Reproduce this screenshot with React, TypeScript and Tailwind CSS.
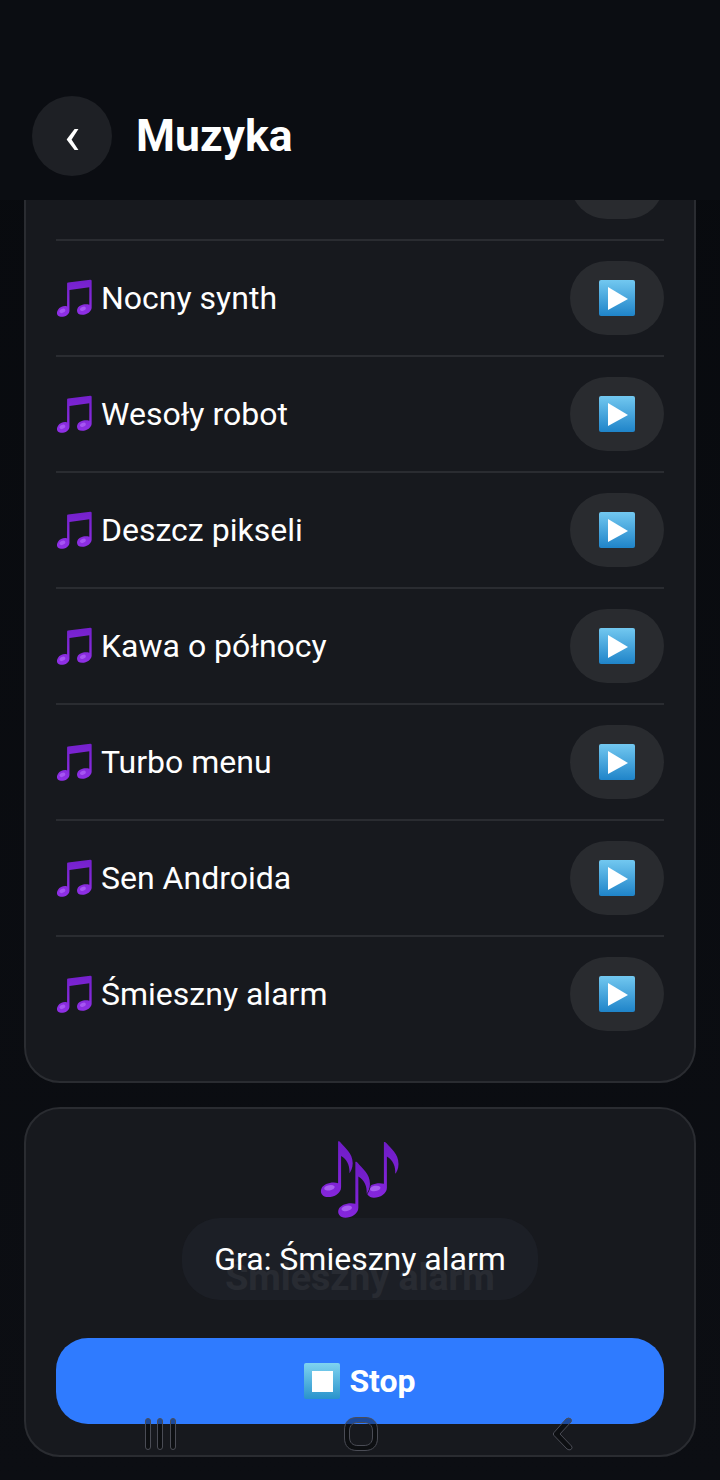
import { useId } from 'react';

const tracks = ['Nocny synth', 'Wesoły robot', 'Deszcz pikseli', 'Kawa o północy', 'Turbo menu', 'Sen Androida', 'Śmieszny alarm'];

// Beamed notes emoji
const NotesIcon = () => {
  const id = useId();
  return (
    <svg width="37" height="39" viewBox="50 25 110 115" className="-mt-[2px] shrink-0">
      <defs>
        <linearGradient id={id} x1="0" y1="0" x2="0" y2="1">
          <stop offset="0" stopColor="#7420cc" />
          <stop offset="1" stopColor="#9030e6" />
        </linearGradient>
      </defs>
      <path
        d="M83 41 Q83 38 86 38 L152 30 Q156 30 156 33 L156 112 C156 124 142 134 128 134 C114 134 110 124 114 115 C118 106 134 100 149 104 L149 52 L90 60 L90 122 C90 134 76 141 64 140 C52 139 50 128 56 119 C62 110 74 106 83 109 Z"
        fill={`url(#${id})`}
      />
      <ellipse cx="69" cy="122" rx="9" ry="6" fill="#a656f2" transform="rotate(-25 69 122)" />
      <ellipse cx="130" cy="116" rx="9" ry="6" fill="#a656f2" transform="rotate(-25 130 116)" />
    </svg>
  );
};

// Single eighth notes, three of them
const MultiNotesIcon = () => {
  const id = useId();
  const note =
    'M84 35 C84 33 88 33 92 38 C105 55 128 68 128 100 C128 115 122 125 118 130 C120 110 112 88 93 78 L93 172 C93 190 72 202 54 202 C38 202 28 190 34 176 C40 162 65 155 84 160 Z';
  return (
    <svg width="80" height="78" viewBox="30 30 240 235">
      <defs>
        <linearGradient id={id} x1="0" y1="0" x2="0" y2="1">
          <stop offset="0" stopColor="#6f1cc6" />
          <stop offset="1" stopColor="#8526dc" />
        </linearGradient>
      </defs>
      <path d={note} fill={`url(#${id})`} />
      <ellipse cx="58" cy="174" rx="16" ry="8" fill="#a85ef0" transform="rotate(-10 58 174)" />
      <path d={note} fill={`url(#${id})`} transform="translate(138 2)" />
      <ellipse cx="196" cy="176" rx="16" ry="8" fill="#a85ef0" transform="rotate(-10 196 176)" />
      <path d={note} fill={`url(#${id})`} stroke="#17191e" strokeWidth="4" paintOrder="stroke" transform="translate(52 62)" />
      <ellipse cx="110" cy="236" rx="16" ry="8" fill="#a85ef0" transform="rotate(-10 110 236)" />
    </svg>
  );
};

const PlayIcon = () => {
  const id = useId();
  return (
    <svg width="36" height="36" viewBox="0 0 36 36">
      <defs>
        <linearGradient id={id} x1="0" y1="0" x2="0" y2="1">
          <stop offset="0" stopColor="#72c8f0" />
          <stop offset="1" stopColor="#1f84c9" />
        </linearGradient>
      </defs>
      <rect x="0" y="0" width="36" height="36" rx="2" fill={`url(#${id})`} />
      <path d="M9 7 L29 19 L9 30 Z" fill="#ffffff" />
    </svg>
  );
};

const StopIcon = () => {
  const id = useId();
  return (
    <svg width="36" height="36" viewBox="0 0 36 36" className="shrink-0">
      <defs>
        <linearGradient id={id} x1="0" y1="0" x2="0" y2="1">
          <stop offset="0" stopColor="#7fd3f0" />
          <stop offset="1" stopColor="#2a93cc" />
        </linearGradient>
      </defs>
      <rect width="36" height="36" rx="2" fill={`url(#${id})`} />
      <rect x="8" y="8" width="21" height="21" fill="#ffffff" />
    </svg>
  );
};

export default function App() {
  return (
    <div className="relative h-[1480px] w-[720px] overflow-hidden bg-gradient-to-b from-[#080a0e] to-[#0c0e13] font-['Roboto',sans-serif] text-white">
      {/* Header */}
      <header className="flex h-[200px] items-center gap-6 bg-[#0b0d12] px-8 pt-[72px]">
        <button className="flex h-20 w-20 items-center justify-center rounded-full bg-[#1e2025] text-[54px] leading-none text-white">‹</button>
        <h1 className="text-[44.5px] font-bold leading-none">Muzyka</h1>
      </header>

      {/* Scrolled content */}
      <main className="h-[1280px] overflow-hidden px-6">
        <div className="-mt-[107px] flex flex-col gap-6">
          <section className="rounded-[36px] border-2 border-[#2a2c31] bg-[#17191e] px-[30px] pb-[28px] pt-[30px]">
            <div className="flex h-[116px] items-center justify-end border-b-2 border-[#2a2c31]">
              <button className="flex h-[74px] w-[94px] items-center justify-center rounded-[37px] bg-[#292b2f]">
                <PlayIcon />
              </button>
            </div>
            {tracks.map((name, i) => (
              <div
                key={name}
                className={i === tracks.length - 1 ? 'flex h-[116px] items-center justify-between border-b-2 border-transparent' : 'flex h-[116px] items-center justify-between border-b-2 border-[#2a2c31]'}
              >
                <div className="flex items-center gap-[8px]">
                  <NotesIcon />
                  <span className="text-[32px] leading-none">{name}</span>
                </div>
                <button className="flex h-[74px] w-[94px] items-center justify-center rounded-[37px] bg-[#292b2f]">
                  <PlayIcon />
                </button>
              </div>
            ))}
          </section>

          {/* Now playing */}
          <section className="relative flex h-[350px] flex-col items-center rounded-[36px] border-2 border-[#2a2c31] bg-[#17191e] px-[30px] pt-[31px]">
            <MultiNotesIcon />
            <h2 className="mt-[40px] text-[37.5px] font-bold leading-[38px]">Śmieszny alarm</h2>
            <button className="mt-[42px] flex h-[86px] w-full items-center justify-center gap-[9px] rounded-[32px] bg-[#2f7bff] text-[32px] font-bold">
              <StopIcon />
              Stop
            </button>
            {/* Toast */}
            <div className="absolute left-[156px] top-[109px] flex h-[82px] w-[356px] items-center justify-center rounded-[38px] bg-[#1c2027]/95 text-[32px]">
              Gra: Śmieszny alarm
            </div>
          </section>
        </div>
      </main>

      {/* Android nav bar */}
      <svg className="absolute bottom-[26px] left-0" width="720" height="38" viewBox="0 1416 720 38" fill="#000000" fillOpacity="0.4" stroke="#4a4c55" strokeWidth="1">
        <rect x="145.5" y="1418.5" width="5" height="31" rx="2.5" />
        <rect x="157.5" y="1418.5" width="5" height="31" rx="2.5" />
        <rect x="170.5" y="1418.5" width="5" height="31" rx="2.5" />
        <path
          fillRule="evenodd"
          d="M357 1417.5 H365 C373 1417.5 377.5 1422 377.5 1430 V1438 C377.5 1446 373 1450.5 365 1450.5 H357 C349 1450.5 344.5 1446 344.5 1438 V1430 C344.5 1422 349 1417.5 357 1417.5 Z M358 1422.5 C353 1422.5 349.5 1425 349.5 1431 V1437 C349.5 1443 353 1445.5 358 1445.5 H364 C369 1445.5 372.5 1443 372.5 1437 V1431 C372.5 1425 369 1422.5 364 1422.5 Z"
        />
        <path d="M566 1419 Q568.5 1417 571 1419 Q572 1421 571 1422 L560 1434 L571.5 1446 Q573 1448 571 1449.5 Q569 1450.5 567 1449 L554 1435.5 Q552.5 1434 554 1432.5 Z" />
      </svg>
    </div>
  );
}
